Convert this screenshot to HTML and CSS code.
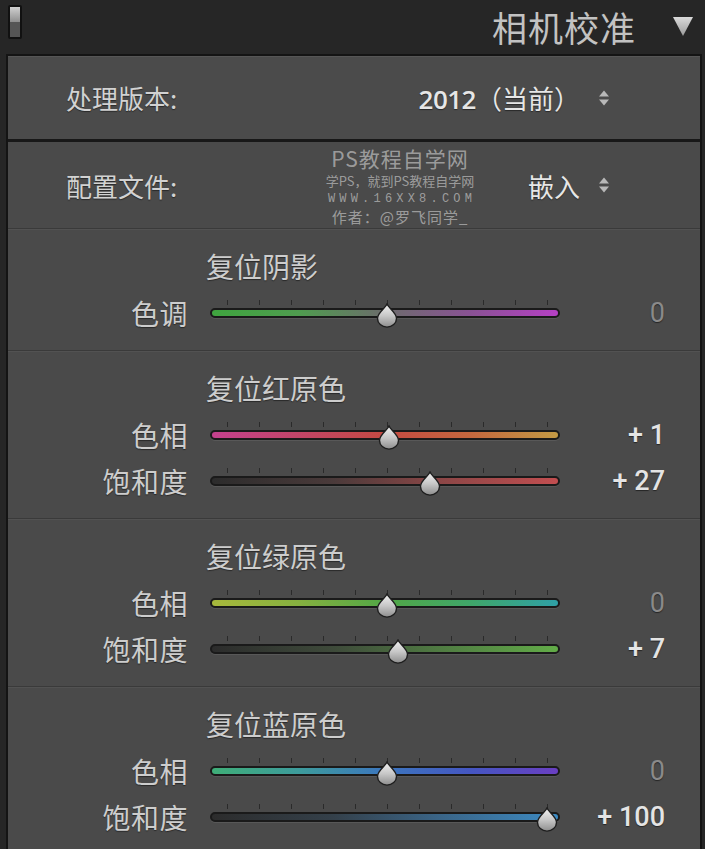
FILE: index.html
```html
<!DOCTYPE html>
<html lang="zh-CN">
<head>
<meta charset="utf-8">
<title>相机校准</title>
<link rel="stylesheet" href="styles.css">
</head>
<body>
<header class="header">
  <div class="toggle"><span class="toggle-on"></span><span class="toggle-off"></span></div>
  <h1 class="title">相机校准</h1>
  <svg class="collapse" width="22" height="22" viewBox="0 0 22 22" aria-hidden="true">
    <defs>
      <linearGradient id="tri" x1="0" y1="0" x2="0" y2="1">
        <stop offset="0" stop-color="#dadada"/>
        <stop offset="1" stop-color="#9a9a9a"/>
      </linearGradient>
    </defs>
    <path d="M1 2 L21 2 L11 21 Z" fill="url(#tri)"/>
  </svg>
</header>

<main class="panel">
  <div class="prop-row prop-process">
    <span class="prop-label">处理版本:</span>
    <span class="prop-value"><span class="latin">2012</span>（当前）</span>
    <svg class="updown" width="12" height="18" viewBox="0 0 12 18" aria-hidden="true">
      <path d="M6 1.5 L11 7.5 L1 7.5 Z" fill="#b8b8b8"/>
      <path d="M1 10.5 L11 10.5 L6 16.5 Z" fill="#b8b8b8"/>
    </svg>
  </div>

  <div class="prop-row prop-profile">
    <span class="prop-label">配置文件:</span>
    <span class="prop-value">嵌入</span>
    <svg class="updown" width="12" height="18" viewBox="0 0 12 18" aria-hidden="true">
      <path d="M6 1.5 L11 7.5 L1 7.5 Z" fill="#b8b8b8"/>
      <path d="M1 10.5 L11 10.5 L6 16.5 Z" fill="#b8b8b8"/>
    </svg>
    <div class="watermark">
      <div class="wm-1">PS教程自学网</div>
      <div class="wm-2">学PS，就到PS教程自学网</div>
      <div class="wm-3">WWW.16XX8.COM</div>
      <div class="wm-4">作者：@罗飞同学_</div>
    </div>
  </div>

  <section class="group">
    <div class="group-title">复位阴影</div>
    <div class="slider-row">
      <span class="slider-label">色调</span>
      <div class="slider">
        <div class="ticks"><i></i><i></i><i></i><i></i><i></i><i></i><i></i><i></i><i></i><i></i><i></i></div>
        <div class="track t-shadow"></div>
        <svg class="thumb" style="--v:0" width="22" height="25" viewBox="0 0 22 25"><use href="#thumb-shape"/></svg>
      </div>
      <span class="slider-value zero">0</span>
    </div>
  </section>

  <section class="group">
    <div class="group-title">复位红原色</div>
    <div class="slider-row">
      <span class="slider-label">色相</span>
      <div class="slider">
        <div class="ticks"><i></i><i></i><i></i><i></i><i></i><i></i><i></i><i></i><i></i><i></i><i></i></div>
        <div class="track t-red-hue"></div>
        <svg class="thumb" style="--v:1" width="22" height="25" viewBox="0 0 22 25"><use href="#thumb-shape"/></svg>
      </div>
      <span class="slider-value">+ 1</span>
    </div>
    <div class="slider-row">
      <span class="slider-label">饱和度</span>
      <div class="slider">
        <div class="ticks"><i></i><i></i><i></i><i></i><i></i><i></i><i></i><i></i><i></i><i></i><i></i></div>
        <div class="track t-red-sat"></div>
        <svg class="thumb" style="--v:27" width="22" height="25" viewBox="0 0 22 25"><use href="#thumb-shape"/></svg>
      </div>
      <span class="slider-value">+ 27</span>
    </div>
  </section>

  <section class="group">
    <div class="group-title">复位绿原色</div>
    <div class="slider-row">
      <span class="slider-label">色相</span>
      <div class="slider">
        <div class="ticks"><i></i><i></i><i></i><i></i><i></i><i></i><i></i><i></i><i></i><i></i><i></i></div>
        <div class="track t-green-hue"></div>
        <svg class="thumb" style="--v:0" width="22" height="25" viewBox="0 0 22 25"><use href="#thumb-shape"/></svg>
      </div>
      <span class="slider-value zero">0</span>
    </div>
    <div class="slider-row">
      <span class="slider-label">饱和度</span>
      <div class="slider">
        <div class="ticks"><i></i><i></i><i></i><i></i><i></i><i></i><i></i><i></i><i></i><i></i><i></i></div>
        <div class="track t-green-sat"></div>
        <svg class="thumb" style="--v:7" width="22" height="25" viewBox="0 0 22 25"><use href="#thumb-shape"/></svg>
      </div>
      <span class="slider-value">+ 7</span>
    </div>
  </section>

  <section class="group">
    <div class="group-title">复位蓝原色</div>
    <div class="slider-row">
      <span class="slider-label">色相</span>
      <div class="slider">
        <div class="ticks"><i></i><i></i><i></i><i></i><i></i><i></i><i></i><i></i><i></i><i></i><i></i></div>
        <div class="track t-blue-hue"></div>
        <svg class="thumb" style="--v:0" width="22" height="25" viewBox="0 0 22 25"><use href="#thumb-shape"/></svg>
      </div>
      <span class="slider-value zero">0</span>
    </div>
    <div class="slider-row">
      <span class="slider-label">饱和度</span>
      <div class="slider">
        <div class="ticks"><i></i><i></i><i></i><i></i><i></i><i></i><i></i><i></i><i></i><i></i><i></i></div>
        <div class="track t-blue-sat"></div>
        <svg class="thumb" style="--v:100" width="22" height="25" viewBox="0 0 22 25"><use href="#thumb-shape"/></svg>
      </div>
      <span class="slider-value">+ 100</span>
    </div>
  </section>
</main>

<svg class="defs" width="0" height="0" aria-hidden="true">
  <defs>
    <linearGradient id="thumb-grad" x1="0" y1="0" x2="0" y2="1">
      <stop offset="0" stop-color="#f2f2f2"/>
      <stop offset="0.5" stop-color="#c8c8c8"/>
      <stop offset="1" stop-color="#8e8e8e"/>
    </linearGradient>
    <g id="thumb-shape">
      <path d="M11 1 C12.5 5 20.5 9.5 20.5 15.5 A9.5 8.6 0 0 1 1.5 15.5 C1.5 9.5 9.5 5 11 1 Z" fill="url(#thumb-grad)" stroke="#1e1e1e" stroke-width="1.4"/>
    </g>
  </defs>
</svg>
</body>
</html>
```

FILE: styles.css
```css
* {
  box-sizing: border-box;
}

html, body {
  margin: 0;
  padding: 0;
}

body {
  width: 705px;
  height: 849px;
  overflow: hidden;
  background: #262626;
  font-family: "Noto Sans CJK SC", "Noto Sans", sans-serif;
  color: #cfcfcf;
}

.defs {
  position: absolute;
  width: 0;
  height: 0;
}

/* ---------- header ---------- */
.header {
  height: 54px;
  display: flex;
  align-items: center;
  padding: 0 11px 0 8px;
  background: #262626;
}

.toggle {
  width: 14px;
  height: 34px;
  border: 2px solid #111;
  border-radius: 2px;
  display: flex;
  flex-direction: column;
  margin-top: -10px;
}

.toggle-on {
  flex: 1;
  background: linear-gradient(#d0d0d0, #8e8e8e);
}

.toggle-off {
  flex: 1;
  background: #555;
}

.title {
  margin: 0 36px 0 auto;
  font-size: 35px;
  font-weight: 400;
  line-height: 40px;
  letter-spacing: 1px;
  color: #c2c2c2;
}

.collapse {
  display: block;
  margin-top: -2px;
}

/* ---------- panel ---------- */
.panel {
  margin: 0 3px 0 6px;
  height: 795px;
  background: #4a4a4a;
  border: 2px solid #141414;
  border-bottom: 0;
}

.prop-row {
  position: relative;
  display: flex;
  align-items: center;
  padding: 0 90px 0 58px;
  font-size: 26px;
  text-shadow: 0 1px 1px rgba(0, 0, 0, 0.45);
}

.prop-process {
  height: 86px;
  background: #4b4b4b;
  border-bottom: 3px solid #181818;
  box-shadow: inset 0 1px 0 #565656;
}

.prop-profile {
  height: 86px;
}

.prop-label {
  color: #d2d2d2;
}

.prop-value {
  margin-left: auto;
  color: #e6e6e6;
}

.latin {
  font-family: "Open Sans", "Noto Sans", sans-serif;
  font-weight: 600;
  letter-spacing: -0.5px;
}

.updown {
  display: block;
  margin-left: 18px;
}

/* watermark overlay */
.watermark {
  position: absolute;
  top: 4px;
  left: 392px;
  transform: translateX(-50%);
  text-align: center;
  color: rgba(210, 210, 210, 0.62);
  text-shadow: none;
  white-space: nowrap;
}

.wm-1 {
  font-size: 21px;
  line-height: 24px;
  letter-spacing: 1px;
}

.wm-2 {
  font-size: 13px;
  line-height: 22px;
}

.wm-3 {
  font-family: "Liberation Mono", "DejaVu Sans Mono", monospace;
  font-size: 12px;
  line-height: 14px;
  letter-spacing: 4.2px;
  margin-right: -4px;
}

.wm-4 {
  font-size: 15px;
  line-height: 22px;
  letter-spacing: 1px;
}

/* ---------- slider groups ---------- */
.group {
  border-top: 1px solid #3a3a3a;
  box-shadow: inset 0 1px 0 #525252;
  padding: 15px 0 14px;
}

.group-title {
  padding-left: 198px;
  font-size: 28px;
  line-height: 44px;
  margin-bottom: 2px;
  color: #cdcdcd;
  text-shadow: 0 1px 1px rgba(0, 0, 0, 0.45);
}

.slider-row {
  height: 46px;
  display: flex;
  align-items: center;
}

.slider-label {
  width: 180px;
  text-align: right;
  font-size: 28px;
  letter-spacing: 0.5px;
  color: #cdcdcd;
  text-shadow: 0 1px 1px rgba(0, 0, 0, 0.45);
}

.slider {
  position: relative;
  align-self: stretch;
  width: 350px;
  margin-left: 22px;
  display: flex;
  flex-direction: column;
}

.ticks {
  display: flex;
  justify-content: space-between;
  width: 321px;
  height: 5px;
  margin: 10px 0 0 17px;
}

.ticks i {
  display: block;
  width: 1px;
  height: 5px;
  background: #2a2a2a;
}

.track {
  height: 10px;
  margin-top: 3px;
  border: 2px solid #1a1a1a;
  border-radius: 5px;
  box-shadow: 0 1px 0 rgba(255, 255, 255, 0.08);
}

.t-shadow {
  background: linear-gradient(90deg, #3fa53f 0%, #4f9c4f 25%, #6c6c6c 50%, #8a5295 75%, #b540c4 100%);
}

.t-red-hue {
  background: linear-gradient(90deg, #c4418e 0%, #c24660 30%, #c44a42 50%, #c4683e 75%, #c39a44 100%);
}

.t-red-sat {
  background: linear-gradient(90deg, #2c2c2c 0%, #4a3a3a 35%, #8a4646 65%, #c24e50 100%);
}

.t-green-hue {
  background: linear-gradient(90deg, #a7b83c 0%, #86b040 25%, #52a746 50%, #3fa66a 75%, #2fa0a6 100%);
}

.t-green-sat {
  background: linear-gradient(90deg, #2c2c2c 0%, #3e4a3a 35%, #4f7a42 65%, #62ac48 100%);
}

.t-blue-hue {
  background: linear-gradient(90deg, #3fae78 0%, #3d9c9c 25%, #3c76be 50%, #4556c2 75%, #6a3fc2 100%);
}

.t-blue-sat {
  background: linear-gradient(90deg, #2c2c2c 0%, #34404a 35%, #3a6486 65%, #3c8ac2 100%);
}

.thumb {
  position: absolute;
  top: 13px;
  left: calc(166px + var(--v) * 1.6px);
  display: block;
}

.slider-value {
  width: 105px;
  text-align: right;
  font-family: "Roboto", "Open Sans", sans-serif;
  font-size: 27px;
  font-weight: 500;
  color: #e4e4e4;
  text-shadow: 0 1px 1px rgba(0, 0, 0, 0.5);
}

.slider-value.zero {
  font-weight: 400;
  color: #8a8a8a;
}
```
